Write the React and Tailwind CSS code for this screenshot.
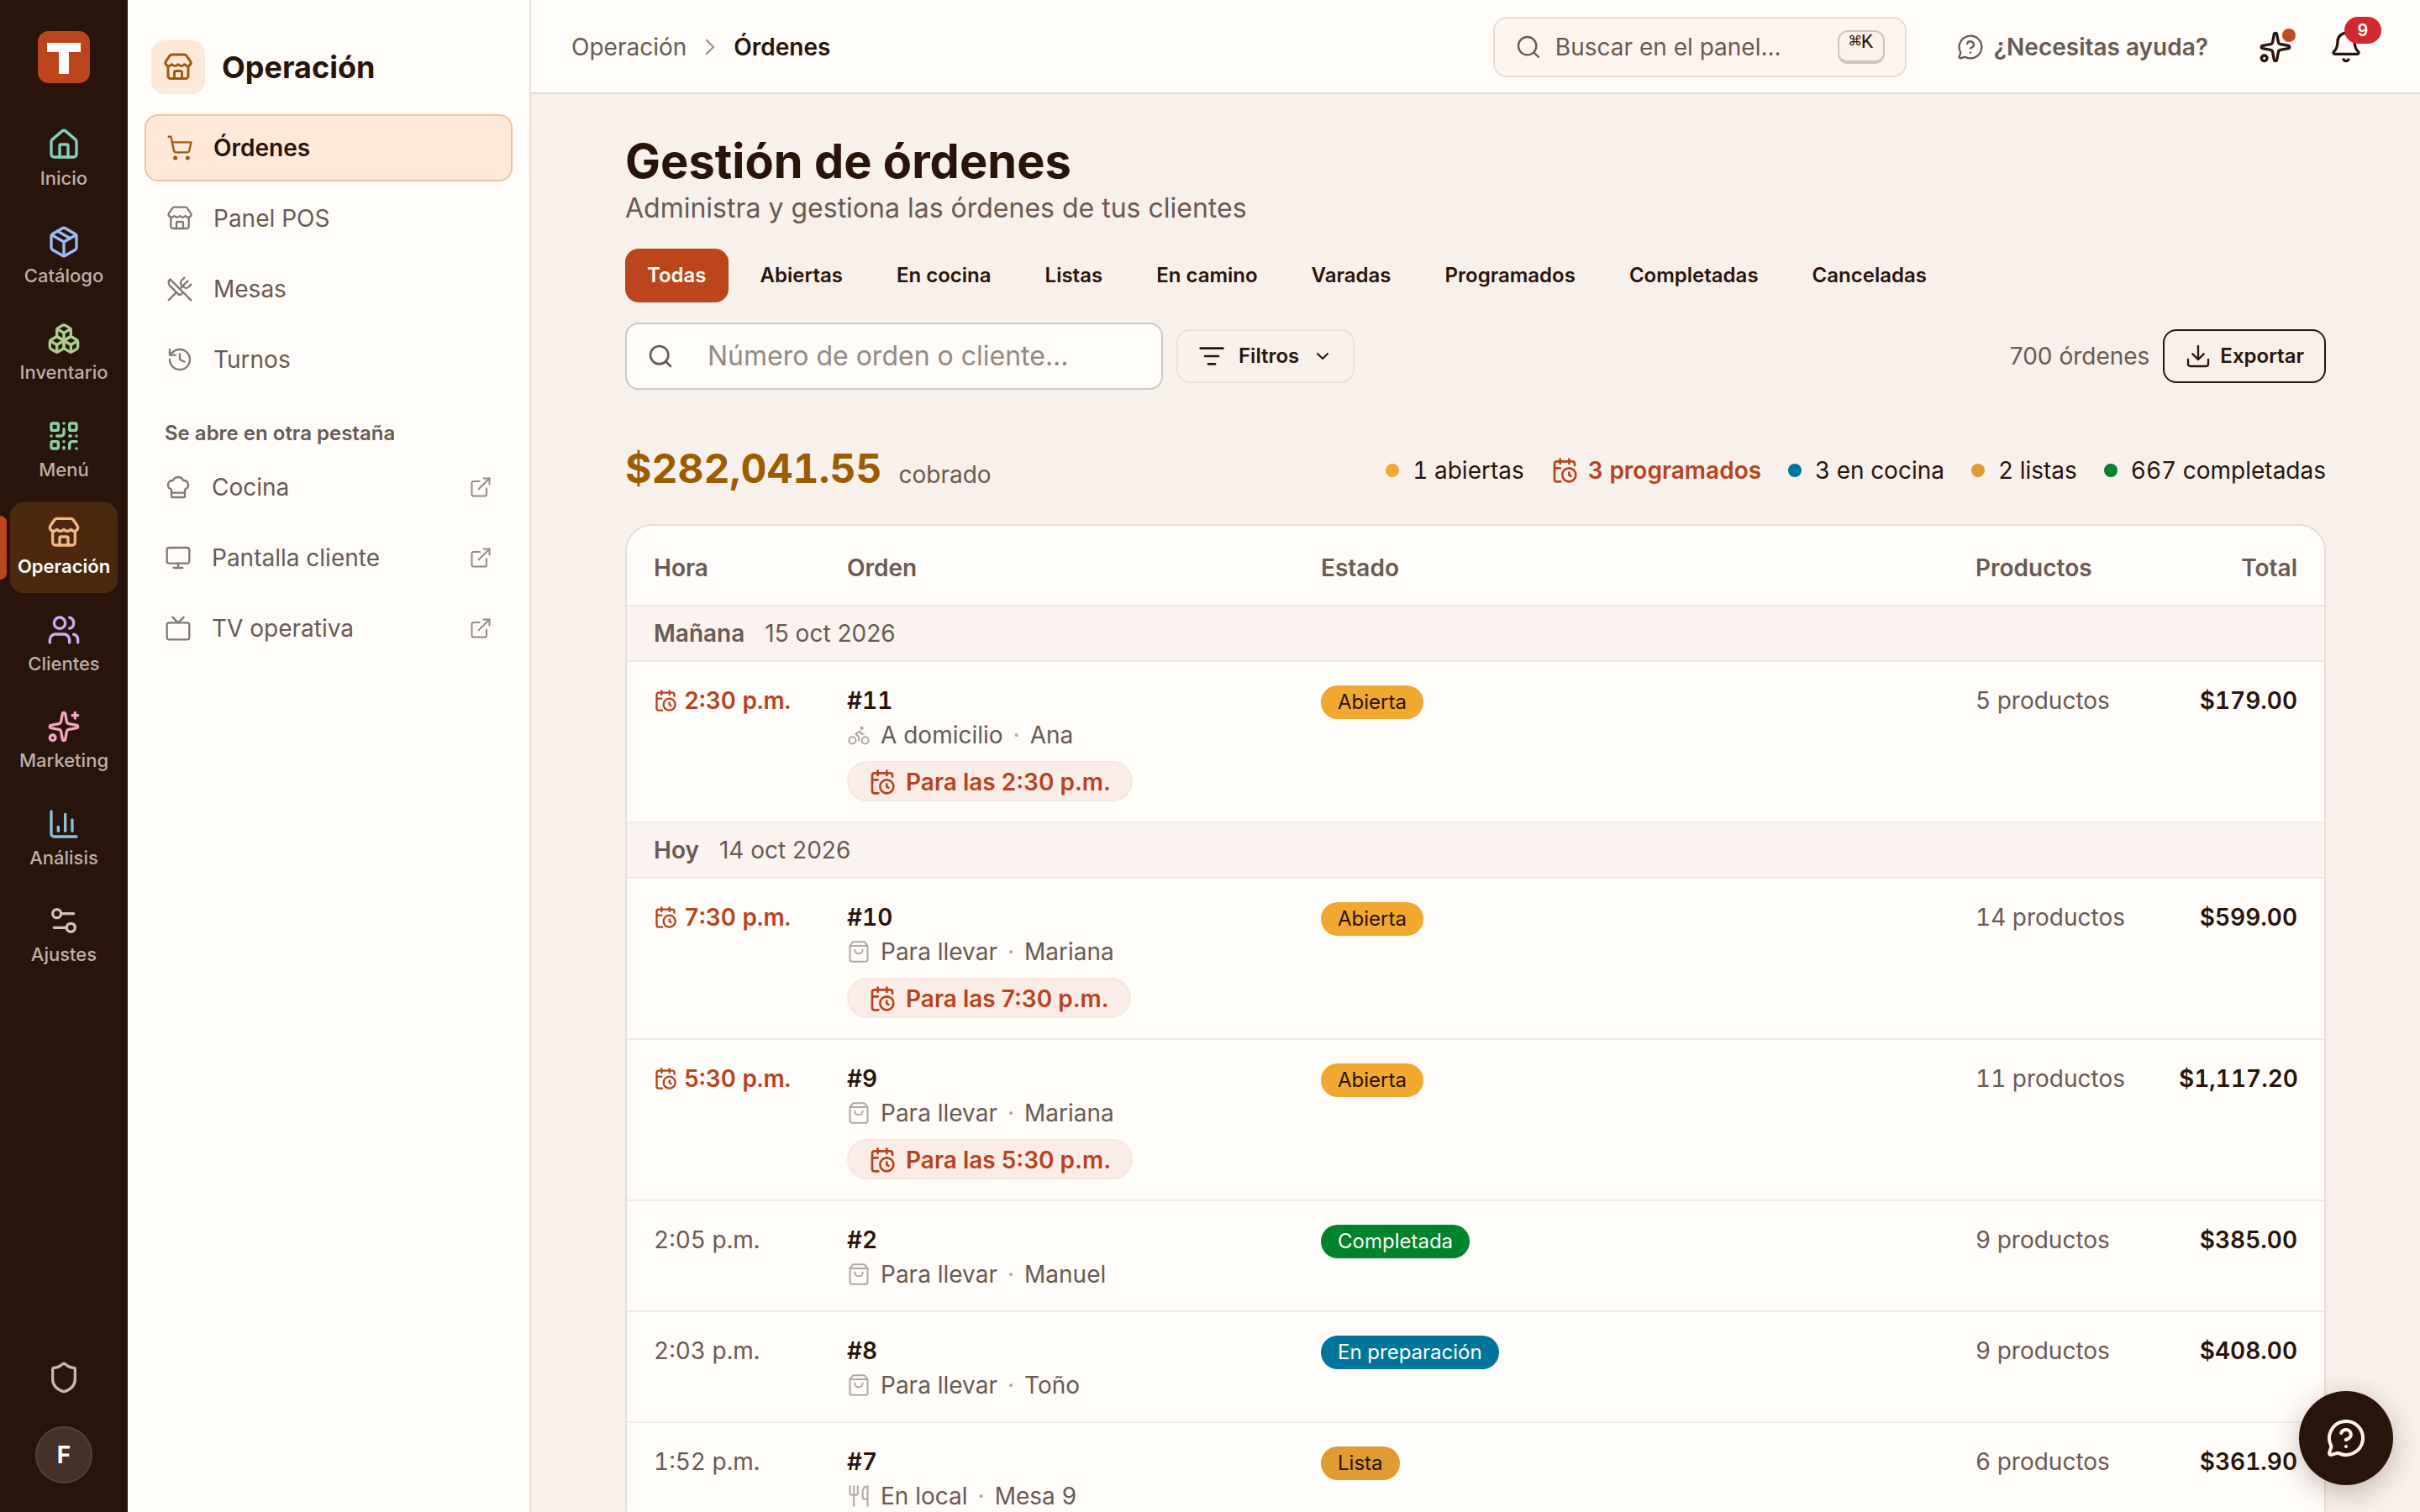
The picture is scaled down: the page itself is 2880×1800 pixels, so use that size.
import {
  House, Package, Boxes, QrCode, Store, Users, Sparkles, ChartColumn, Settings2, Shield,
  ShoppingCart, UtensilsCrossed, History, ChefHat, Monitor, Tv, ExternalLink, Search,
  MessageCircleQuestionMark, Bell, ListFilter, ChevronDown, ChevronRight, Download,
  CalendarClock, Bike, ShoppingBag, Utensils,
} from "lucide-react";

const rail = [
  { label: "Inicio", icon: House, color: "text-[#7fd1bd]" },
  { label: "Catálogo", icon: Package, color: "text-[#9dbcfb]" },
  { label: "Inventario", icon: Boxes, color: "text-[#adcf8f]" },
  { label: "Menú", icon: QrCode, color: "text-[#8bd3a6]" },
  { label: "Operación", icon: Store, color: "text-[#f0b784]", active: true },
  { label: "Clientes", icon: Users, color: "text-[#c9adf0]" },
  { label: "Marketing", icon: Sparkles, color: "text-[#f7a3c4]" },
  { label: "Análisis", icon: ChartColumn, color: "text-[#86c3e0]" },
  { label: "Ajustes", icon: Settings2, color: "text-[#d1c1b7]" },
];

const sections = [
  { label: "Órdenes", icon: ShoppingCart, active: true },
  { label: "Panel POS", icon: Store },
  { label: "Mesas", icon: UtensilsCrossed },
  { label: "Turnos", icon: History },
];

const external = [
  { label: "Cocina", icon: ChefHat },
  { label: "Pantalla cliente", icon: Monitor },
  { label: "TV operativa", icon: Tv },
];

const tabs = ["Todas", "Abiertas", "En cocina", "Listas", "En camino", "Varadas", "Programados", "Completadas", "Canceladas"];

const statusStyle = {
  Abierta: "bg-[#f0a830] text-[#2a140b]",
  Completada: "bg-[#00832d] text-[#fffcf9]",
  "En preparación": "bg-[#00759c] text-[#fffcf9]",
  Lista: "bg-[#e09b33] text-[#2a140b]",
};

const groups = [
  {
    day: "Mañana",
    date: "15 oct 2026",
    orders: [
      { time: "2:30 p.m.", scheduled: true, id: "#11", icon: Bike, type: "A domicilio", who: "Ana", status: "Abierta", items: "5 productos", total: "$179.00" },
    ],
  },
  {
    day: "Hoy",
    date: "14 oct 2026",
    orders: [
      { time: "7:30 p.m.", scheduled: true, id: "#10", icon: ShoppingBag, type: "Para llevar", who: "Mariana", status: "Abierta", items: "14 productos", total: "$599.00" },
      { time: "5:30 p.m.", scheduled: true, id: "#9", icon: ShoppingBag, type: "Para llevar", who: "Mariana", status: "Abierta", items: "11 productos", total: "$1,117.20" },
      { time: "2:05 p.m.", id: "#2", icon: ShoppingBag, type: "Para llevar", who: "Manuel", status: "Completada", items: "9 productos", total: "$385.00" },
      { time: "2:03 p.m.", id: "#8", icon: ShoppingBag, type: "Para llevar", who: "Toño", status: "En preparación", items: "9 productos", total: "$408.00" },
      { time: "1:52 p.m.", id: "#7", icon: Utensils, type: "En local", who: "Mesa 9", status: "Lista", items: "6 productos", total: "$361.90" },
    ],
  },
];

function Rail() {
  return (
    <nav aria-label="Principal" className="flex w-38 shrink-0 flex-col items-center bg-[#29140b] pt-9 pb-[34px]">
      <a href="#inicio" aria-label="Inicio" className="grid size-16 place-items-center rounded-xl">
        <svg viewBox="0 0 64 64" className="size-16">
          <rect x="1" y="1" width="62" height="62" rx="13" fill="#bc451d" />
          <path d="M12 15h40v11H38v26H26v-26H12z" fill="#fffcf9" />
        </svg>
      </a>
      <ul className="mt-9 flex h-[1032px] w-full flex-col justify-between">
        {rail.map(({ label, icon: Icon, color, active }) => (
          <li key={label} className="relative px-3">
            {active && <span className="absolute left-0 top-4 h-[76px] w-2 rounded-r-lg bg-[#bc451d]" />}
            <a
              href={"#" + label}
              className={
                "flex h-[108px] flex-col items-center rounded-2xl pt-4 text-[22px] leading-[32px] " +
                (active ? "bg-[#4c290e] font-semibold text-[#fffcf9]" : "font-medium text-[#bdb0a9]")
              }
            >
              <Icon className={"mb-1 size-10 " + color} strokeWidth={2} />
              {label}
            </a>
          </li>
        ))}
      </ul>
      <button type="button" aria-label="Seguridad" className="mt-auto mb-[38px] text-[#c5b7b1]">
        <Shield className="size-10" />
      </button>
      <button type="button" className="size-[68px] rounded-full border-2 border-[#55413a] bg-[#45302a] text-[28px] font-bold text-[#fffcf9]">
        F
      </button>
    </nav>
  );
}

function Sidebar() {
  return (
    <aside className="w-[480px] shrink-0 border-r-2 border-[#e9ddd5] bg-[#fffcf9] px-5 pt-12">
      <div className="flex items-center gap-5 px-2">
        <span className="grid size-16 place-items-center rounded-2xl bg-[#fee9d9]">
          <Store className="size-9 text-[#9a5b0f]" />
        </span>
        <h2 className="text-4xl font-bold text-[#29140b]">Operación</h2>
      </div>
      <ul className="mt-6 flex flex-col gap-1">
        {sections.map(({ label, icon: Icon, active }) => (
          <li key={label}>
            <a
              href={"#" + label}
              className={
                "flex h-20 items-center gap-6 rounded-2xl border-2 px-6 text-[28px] " +
                (active ? "border-[#eac6a8] bg-[#fee9d9] font-semibold text-[#29140b]" : "border-transparent text-[#695a53]")
              }
            >
              <Icon className={"size-8 " + (active ? "text-[#9a5b0f]" : "text-[#857871]")} strokeWidth={1.75} />
              {label}
            </a>
          </li>
        ))}
      </ul>
      <h3 className="mt-8 px-6 text-2xl font-semibold text-[#695a53]">Se abre en otra pestaña</h3>
      <ul className="mt-2 flex flex-col gap-1">
        {external.map(({ label, icon: Icon }) => (
          <li key={label}>
            <a href={"#" + label} className="flex h-20 items-center gap-6 px-6 text-[28px] text-[#695a53]">
              <Icon className="size-8 text-[#857871]" strokeWidth={1.75} />
              {label}
              <ExternalLink className="ml-auto size-7 text-[#988c86]" strokeWidth={1.75} />
            </a>
          </li>
        ))}
      </ul>
    </aside>
  );
}

function TopBar() {
  return (
    <header className="flex h-28 shrink-0 items-center border-b-2 border-[#e9ddd5] bg-[#fffcf9] pt-0.5 pl-12 pr-[68px]">
      <nav aria-label="Ruta" className="flex items-center gap-3 text-[28px]">
        <a href="#operacion" className="text-[#695a53]">Operación</a>
        <ChevronRight className="size-8 text-[#a0958f]" strokeWidth={1.75} />
        <span className="font-semibold text-[#29140b]">Órdenes</span>
      </nav>
      <button
        type="button"
        className="ml-auto flex h-18 w-[492px] items-center gap-4 rounded-2xl border-2 border-[#e9ddd3] bg-[#fdf4ee] px-6 text-[28px] text-[#695a53]"
      >
        <Search className="size-8" strokeWidth={1.75} />
        Buscar en el panel...
        <kbd className="ml-auto flex h-10 w-14 justify-center rounded-xl border-2 border-b-4 border-[#cfc5bf] bg-[#f8f1ec] font-['Liberation_Mono','DejaVu_Sans_Mono',monospace] text-2xl leading-[26px] text-[#29140b]">
          ⌘K
        </kbd>
      </button>
      <a href="#ayuda" className="ml-15 flex items-center gap-3 text-[28px] font-semibold text-[#695a53]">
        <MessageCircleQuestionMark className="size-8" strokeWidth={1.75} />
        ¿Necesitas ayuda?
      </a>
      <button type="button" aria-label="Asistente" className="relative ml-15 text-[#29140b]">
        <Sparkles className="size-10" />
        <span className="absolute -top-0.5 -right-1 size-4 rounded-full bg-[#bc4b1f]" />
      </button>
      <button type="button" aria-label="Notificaciones" className="relative ml-11 text-[#29140b]">
        <Bell className="size-10" />
        <span className="absolute -top-4 left-[18px] grid h-8 w-11 place-items-center rounded-full bg-[#d02a30] text-xl font-semibold text-white">
          9
        </span>
      </button>
    </header>
  );
}

function Stat({ dot, children }) {
  return (
    <li className="flex items-center gap-4">
      <span className={"size-4 rounded-full " + dot} />
      {children}
    </li>
  );
}

function OrderRow({ order }) {
  const Icon = order.icon;
  return (
    <tr className="border-b-2 border-[#f2ece8] align-top">
      <td className="py-6 pl-8 leading-[44px] tabular-nums">
        {order.scheduled ? (
          <span className="flex items-center gap-2 font-semibold text-[#b8431f]">
            <CalendarClock className="size-7" />
            {order.time}
          </span>
        ) : (
          <span className="text-[#695a53]">{order.time}</span>
        )}
      </td>
      <td className="px-8 py-6 text-[#695a53]">
        <a href={"#orden-" + order.id.slice(1)} className="block font-semibold leading-[44px] text-[#29140b] tabular-nums">
          {order.id}
        </a>
        <span className="flex items-center gap-3 leading-[38px]">
          <Icon className="size-7 text-[#b0a8a3]" strokeWidth={1.75} />
          {order.type}
          <span className="text-[#b0a8a3]">·</span>
          {order.who}
        </span>
        {order.scheduled && (
          <span className="mt-3 flex h-12 w-fit items-center gap-3 rounded-full border-2 border-[#f8e6e0] bg-[#faece7] px-6 pt-0.5 font-semibold text-[#b8431f]">
            <CalendarClock className="size-8" />
            Para las {order.time}
          </span>
        )}
      </td>
      <td className="px-8 py-7">
        <span className={"flex h-10 w-fit items-center rounded-full px-5 text-2xl " + statusStyle[order.status]}>
          {order.status}
        </span>
      </td>
      <td className="px-8 py-6 leading-[44px] whitespace-nowrap text-[#695a53] tabular-nums">{order.items}</td>
      <td className="px-8 py-6 text-right leading-[44px] font-semibold text-[#29140b] tabular-nums">{order.total}</td>
    </tr>
  );
}

function OrdersTable() {
  return (
    <div className="mt-8 overflow-hidden rounded-4xl border-2 border-[#e9ddd5] bg-[#fffcf9]">
      <table className="w-full table-fixed text-[28px]">
        <colgroup>
          <col className="w-[230px]" />
          <col className="w-[564px]" />
          <col />
          <col className="w-[242px]" />
          <col className="w-[205px]" />
        </colgroup>
        <thead>
          <tr className="h-[95px] border-b-2 border-[#f0e8e3] text-left text-[#695a53]">
            <th scope="col" className="px-8 pt-1.5 font-semibold">Hora</th>
            <th scope="col" className="px-8 pt-1.5 font-semibold">Orden</th>
            <th scope="col" className="px-8 pt-1.5 font-semibold">Estado</th>
            <th scope="col" className="px-8 pt-1.5 font-semibold">Productos</th>
            <th scope="col" className="px-8 pt-1.5 text-right font-semibold">Total</th>
          </tr>
        </thead>
        {groups.map((group) => (
          <tbody key={group.day}>
            <tr className="h-[66px] border-b-2 border-[#f0e6e1] bg-[#faf3ef] text-left text-[#695a53]">
              <th scope="rowgroup" colSpan={5} className="px-8 font-normal">
                <span className="mr-6 font-semibold">{group.day}</span>
                {group.date}
              </th>
            </tr>
            {group.orders.map((order) => (
              <OrderRow key={order.id} order={order} />
            ))}
          </tbody>
        ))}
      </table>
    </div>
  );
}

export default function App() {
  return (
    <div className="flex h-screen overflow-hidden bg-[#f8f0eb] font-['Inter',sans-serif] text-[#29140b]">
      <Rail />
      <Sidebar />
      <div className="flex min-w-0 flex-1 flex-col">
        <TopBar />
        <main className="min-h-0 flex-1 overflow-hidden px-28 pt-12">
          <h1 className="text-[56px] leading-[64px] font-bold">Gestión de órdenes</h1>
          <p className="text-[32px] leading-[48px] text-[#695a53]">Administra y gestiona las órdenes de tus clientes</p>

          <div role="tablist" className="mt-6 flex gap-3">
            {tabs.map((tab, i) => (
              <button
                key={tab}
                type="button"
                role="tab"
                aria-selected={i === 0}
                className={"h-16 rounded-2xl px-[26px] text-2xl font-semibold " + (i === 0 ? "bg-[#bc451d] text-[#fffcf9]" : "")}
              >
                {tab}
              </button>
            ))}
          </div>

          <div className="mt-6 flex items-center gap-4">
            <label className="flex h-20 w-[640px] items-center gap-10 rounded-2xl border-2 border-[#cdc9c5] bg-[#fffcf9] px-6">
              <Search className="size-8 shrink-0 text-[#695a53]" />
              <input
                type="search"
                aria-label="Buscar órdenes"
                placeholder="Número de orden o cliente..."
                className="min-w-0 flex-1 bg-transparent text-[32px] outline-none placeholder:text-[#948a83]"
              />
            </label>
            <button type="button" className="flex h-16 items-center gap-4 rounded-2xl border-2 border-[#ecdfd6] px-6 text-2xl font-semibold">
              <ListFilter className="size-8" />
              Filtros
              <ChevronDown className="size-6" />
            </button>
            <span className="ml-auto text-[28px] text-[#695a53]">700 órdenes</span>
            <button type="button" className="flex h-16 items-center gap-2.5 rounded-2xl border-2 border-[#29140b] px-6 text-2xl font-semibold">
              <Download className="size-8" strokeWidth={1.75} />
              Exportar
            </button>
          </div>

          <div className="mt-16 flex h-16 items-center justify-between">
            <p className="flex items-baseline gap-5 text-[28px] text-[#695a53]">
              <strong className="text-5xl font-bold text-[#9d5c00] tabular-nums">$282,041.55</strong>
              cobrado
            </p>
            <ul className="flex gap-8 text-[28px] tabular-nums">
              <Stat dot="bg-[#f0a830]">1 abiertas</Stat>
              <li className="flex items-center gap-3 font-semibold text-[#b8431f]">
                <CalendarClock className="size-8" />
                3 programados
              </li>
              <Stat dot="bg-[#00759c]">3 en cocina</Stat>
              <Stat dot="bg-[#e09b33]">2 listas</Stat>
              <Stat dot="bg-[#00832d]">667 completadas</Stat>
            </ul>
          </div>

          <OrdersTable />
        </main>
      </div>
      <button
        type="button"
        aria-label="Ayuda"
        className="fixed right-8 bottom-8 grid size-28 place-items-center rounded-full bg-[#29140b] text-[#fdf4ee] shadow-[0_8px_32px_rgba(80,40,30,0.3)]"
      >
        <MessageCircleQuestionMark className="size-12" />
      </button>
    </div>
  );
}
